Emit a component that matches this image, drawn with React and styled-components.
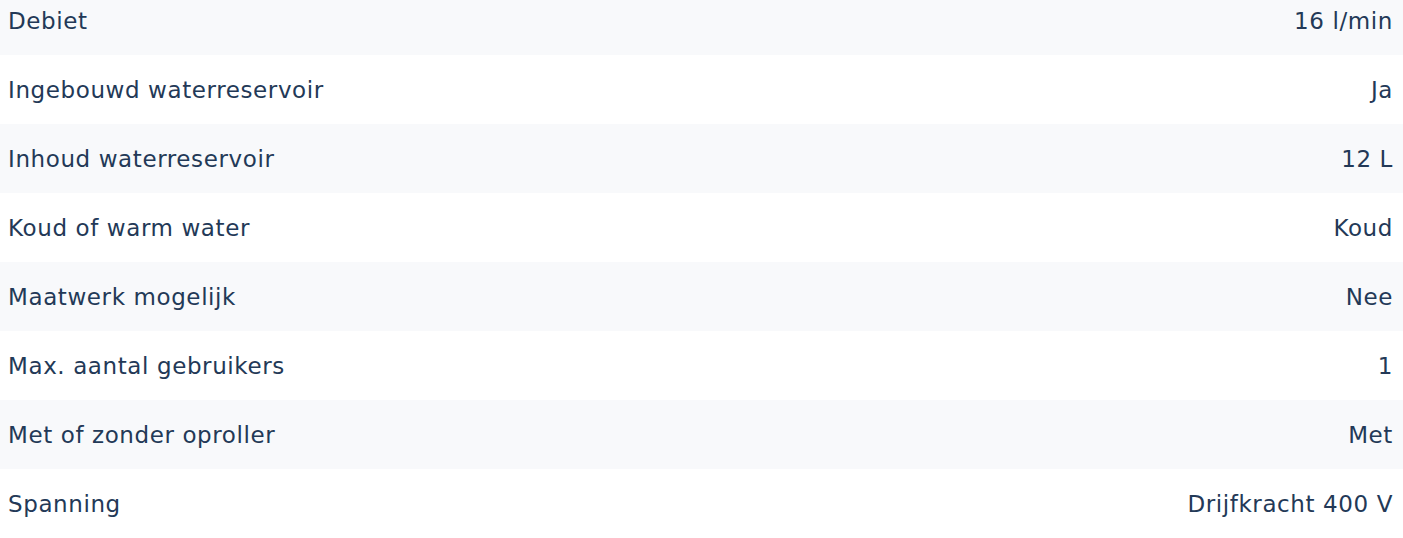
import React from 'react'
import styled, { createGlobalStyle } from 'styled-components'

const GlobalStyle = createGlobalStyle`
  html, body {
    margin: 0;
    padding: 0;
    background: #ffffff;
  }
  body {
    font-family: "DejaVu Sans", "Open Sans", sans-serif;
    overflow: hidden;
  }
`;

const SpecTable = styled.div`
  display: flex;
  flex-direction: column;
  margin-top: -14px;
`;

const SpecRow = styled.div`
  display: flex;
  align-items: center;
  justify-content: space-between;
  height: 69px;
  padding: 0 10px 0 8px;
  background: ${p => (p.$striped ? '#f8f9fb' : '#ffffff')};
  color: #233957;
  font-size: 23px;
  letter-spacing: 0.6px;
`;

const Label = styled.span``;
const Value = styled.span`
  text-align: right;
`;

const specs = [
  ['Debiet', '16 l/min'],
  ['Ingebouwd waterreservoir', 'Ja'],
  ['Inhoud waterreservoir', '12 L'],
  ['Koud of warm water', 'Koud'],
  ['Maatwerk mogelijk', 'Nee'],
  ['Max. aantal gebruikers', '1'],
  ['Met of zonder oproller', 'Met'],
  ['Spanning', 'Drijfkracht 400 V'],
]

export default function App() {
  return (
    <>
      <GlobalStyle />
      <SpecTable>
        {specs.map(([label, value], i) => (
          <SpecRow key={label} $striped={i % 2 === 0}>
            <Label>{label}</Label>
            <Value>{value}</Value>
          </SpecRow>
        ))}
      </SpecTable>
    </>
  )
}
